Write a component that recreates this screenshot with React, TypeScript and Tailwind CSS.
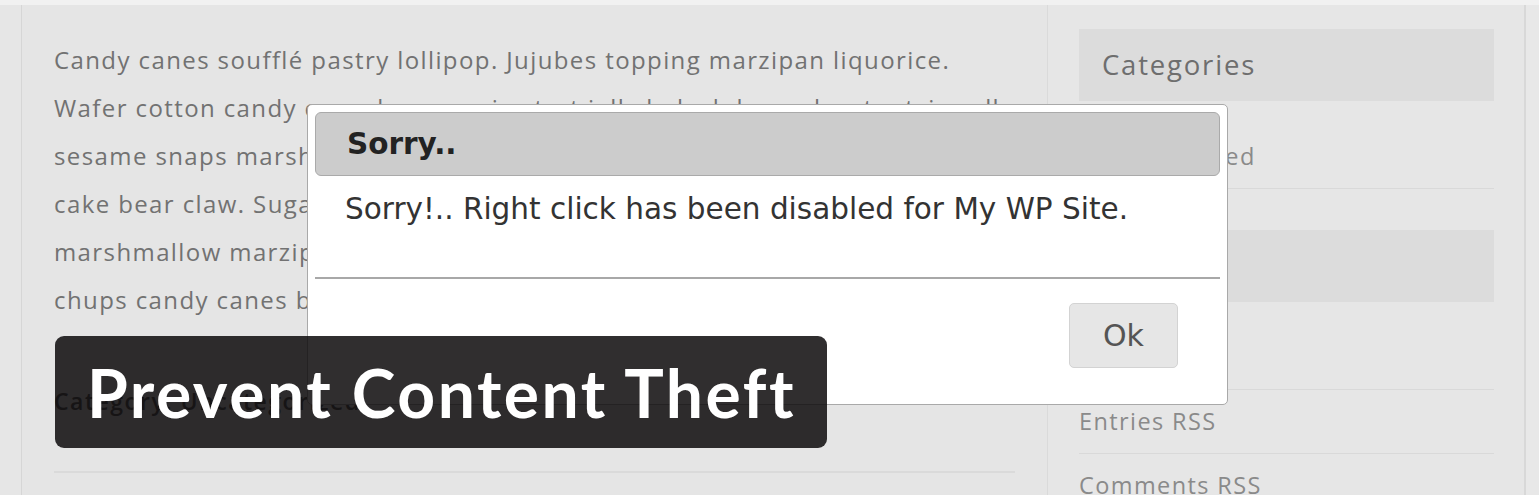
import React from 'react';

const body = '"Open Sans", "Liberation Sans", sans-serif';
const verdana = '"DejaVu Sans", Verdana, sans-serif';

const lines = [
  'Candy canes soufflé pastry lollipop. Jujubes topping marzipan liquorice.',
  'Wafer cotton candy cupcake gummies tart jelly halvah bear claw tootsie roll.',
  'sesame snaps marshmallow chocolate bar oat cake dragée jelly beans pudding',
  'cake bear claw. Sugar plum topping chocolate cake muffin caramels brownie',
  'marshmallow marzipan icing wafer. Donut biscuit sweet roll cheesecake lollipop',
  'chups candy canes bonbon gummi bears sesame snaps.',
];

function SidebarItem({ label, first = false, line = true }: { label: string; first?: boolean; line?: boolean }) {
  return (
    <div
      className={`h-[64px] flex items-center text-[23.5px] tracking-[1.4px] text-[#8a8a8a] ${first ? 'mt-[24px]' : ''} ${line ? 'border-b border-[#d9d9d9]' : ''}`}
    >
      {label}
    </div>
  );
}

function WidgetTitle({ label }: { label: string }) {
  return (
    <div className="h-[72px] bg-[#dcdcdc] flex items-center pl-[23px] text-[27.5px] tracking-[1.8px] text-[#6e6e6e]">
      {label}
    </div>
  );
}

export default function App() {
  return (
    <div className="relative w-[1539px] h-[495px] overflow-hidden bg-[#f1f1f1]" style={{ fontFamily: body }}>
      <div className="mt-[5px] h-[490px] flex bg-[#e6e6e6]">
        {/* left gutter */}
        <div className="w-[22px] shrink-0 border-r border-[#d6d6d6]" />

        {/* main content */}
        <main className="w-[1026px] shrink-0 border-r border-[#dadada] bg-[#e5e5e5] pl-[32px] pr-[32px] pt-[31px]">
          <div className="text-[24px] tracking-[1.4px] leading-[48px] text-[#727272]">
            {lines.map((l) => (
              <div key={l} className="whitespace-nowrap">{l}</div>
            ))}
          </div>
          <div className="mt-[60px] text-[23px] tracking-[1.5px] font-semibold text-[#4a4a4a]">Category: Uncategorized</div>
          <div className="mt-[52px] h-[2px] w-[961px] bg-[#dadada]" />
        </main>

        {/* sidebar */}
        <aside className="w-[478px] shrink-0 border-r-2 border-[#d8d8d8] pl-[31px] pr-[30px] pt-[24px]">
          <WidgetTitle label="Categories" />
          <SidebarItem label="Uncategorized" first />
          <div className="mt-[41px]">
            <WidgetTitle label="Meta" />
          </div>
          <SidebarItem label="Log in" first />
          <SidebarItem label="Entries RSS" />
          <SidebarItem label="Comments RSS" line={false} />
        </aside>
        <div className="flex-1 bg-[#e8e8e8]" />
      </div>

      {/* right-click dialog */}
      <div
        className="absolute left-[307px] top-[104px] w-[921px] h-[301px] bg-white border border-[#a9a9a9] rounded-[5px] p-[7px] flex flex-col"
        style={{ fontFamily: verdana }}
      >
        <div className="h-[64px] shrink-0 bg-[#cccccc] border border-[#aaaaaa] rounded-[6px] flex items-center pl-[31px] text-[29.5px] font-bold text-[#222]">
          Sorry..
        </div>
        <div className="pl-[30px] pt-[15px] h-[103px] shrink-0 text-[29.5px] leading-[36px] text-[#333] border-b-2 border-[#a8a8a8]">
          Sorry!.. Right click has been disabled for My WP Site.
        </div>
        <div className="flex-1 flex justify-end items-start pt-[24px] pr-[42px]">
          <button className="w-[109px] h-[65px] rounded-[5px] bg-[#e6e6e6] border border-[#d3d3d3] text-[30px] text-[#555]">
            Ok
          </button>
        </div>
      </div>

      {/* title badge */}
      <div className="absolute left-[55px] top-[336px] w-[772px] h-[112px] rounded-[9px] bg-[rgba(14,12,13,0.86)] flex items-center pl-[32px]">
        <span className="text-[66px] font-bold text-white tracking-[2.5px]" style={{ fontFamily: 'Lato, "Open Sans", sans-serif' }}>
          Prevent Content Theft
        </span>
      </div>
    </div>
  );
}
